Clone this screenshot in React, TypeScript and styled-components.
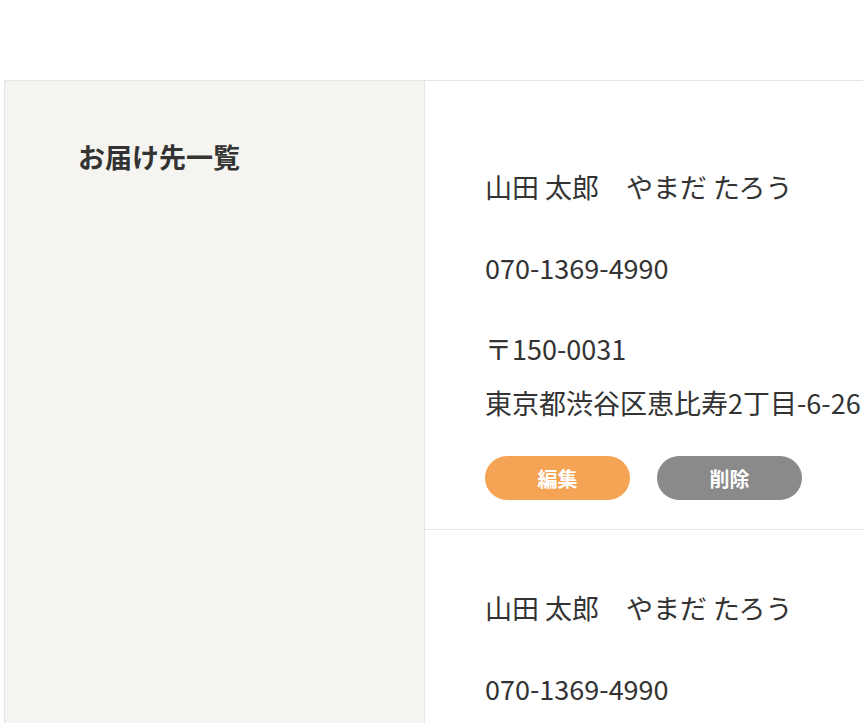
import React from "react";
import styled, { createGlobalStyle } from "styled-components";

const GlobalStyle = createGlobalStyle`
  html, body {
    margin: 0;
    padding: 0;
    overflow: hidden;
    background: #ffffff;
  }
  body {
    font-family: "Noto Sans CJK JP", "Noto Sans", sans-serif;
    color: #333333;
  }
  * { box-sizing: border-box; }
`;

const Page = styled.div`
  padding: 80px 0 0 4px;
  width: 1100px;
`;

const Layout = styled.div`
  display: flex;
  border-top: 1px solid #e6e6e6;
  border-left: 1px solid #e6e6e6;
  min-height: 700px;
`;

const Sidebar = styled.aside`
  flex: 0 0 420px;
  background: #f5f4f0;
  border-right: 1px solid #e6e6e6;
  padding: 59px 0 0 73px;
`;

const Heading = styled.h2`
  margin: 0;
  font-size: 27px;
  font-weight: 700;
  line-height: 33px;
  color: #333333;
`;

const Main = styled.main`
  flex: 1;
  padding-top: 28px;
`;

const Card = styled.section`
  padding: 51px 60px 29px;
  border-bottom: 1px solid #e6e6e6;
`;

const Line = styled.p`
  margin: 0 0 27px;
  font-size: 27px;
  line-height: 54px;
  white-space: nowrap;
  color: #333333;
`;

const Actions = styled.div`
  display: flex;
  gap: 27px;
  margin-top: -1px;
`;

const Button = styled.button<{ $variant: "edit" | "delete" }>`
  width: 145px;
  height: 44px;
  border: none;
  border-radius: 22px;
  background: ${(p) => (p.$variant === "edit" ? "#f5a455" : "#8a8a8a")};
  color: #ffffff;
  font-family: "Noto Sans CJK JP", sans-serif;
  font-size: 20px;
  font-weight: 700;
  cursor: pointer;
  padding: 0;
`;

const addresses = [
  {
    name: "山田 太郎　やまだ たろう",
    tel: "070-1369-4990",
    zip: "〒150-0031",
    addr: "東京都渋谷区恵比寿2丁目-6-26",
  },
  {
    name: "山田 太郎　やまだ たろう",
    tel: "070-1369-4990",
    zip: "〒150-0031",
    addr: "東京都渋谷区恵比寿2丁目-6-26",
  },
];

export default function App() {
  return (
    <>
      <GlobalStyle />
      <Page>
        <Layout>
          <Sidebar>
            <Heading>お届け先一覧</Heading>
          </Sidebar>
          <Main>
            {addresses.map((a, i) => (
              <Card key={i}>
                <Line>{a.name}</Line>
                <Line>{a.tel}</Line>
                <Line>
                  {a.zip}
                  <br />
                  {a.addr}
                </Line>
                <Actions>
                  <Button $variant="edit">編集</Button>
                  <Button $variant="delete">削除</Button>
                </Actions>
              </Card>
            ))}
          </Main>
        </Layout>
      </Page>
    </>
  );
}
